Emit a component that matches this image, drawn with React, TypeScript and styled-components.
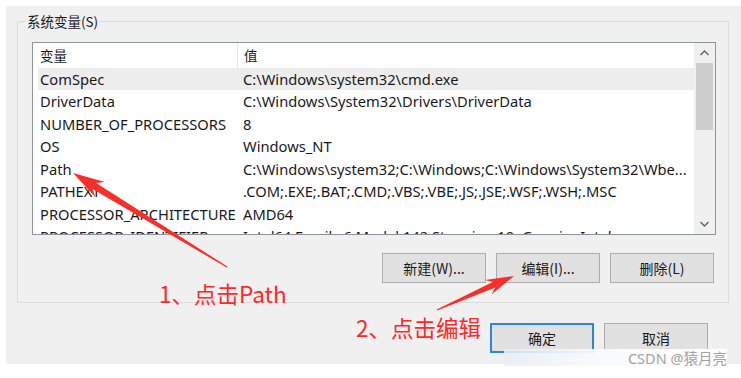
import React from 'react';
import styled, { createGlobalStyle } from 'styled-components';

const GlobalStyle = createGlobalStyle`
  html, body {
    margin: 0;
    padding: 0;
    background: #ffffff;
  }
  body {
    font-family: "Noto Sans", "Noto Sans CJK SC", sans-serif;
  }
`;

const UI_FONT = `"Noto Sans", "Noto Sans CJK SC", sans-serif`;
const CJK_FONT = `"Noto Sans CJK SC", "Noto Sans", sans-serif`;

const Page = styled.div`
  position: relative;
  width: 741px;
  height: 378px;
  overflow: hidden;
  background: #ffffff;
`;

const Dialog = styled.div`
  margin: 6px 0 0 6px;
  width: 735px;
  height: 358px;
  box-sizing: border-box;
  background: #f0f0f0;
  padding: 15px 33px 0 11px;
  display: flex;
  flex-direction: column;
`;

const GroupBox = styled.div`
  position: relative;
  width: 712px;
  height: 282px;
  box-sizing: border-box;
  border: 1px solid #dcdcdc;
  padding: 20px 12px 0 14px;
  display: flex;
  flex-direction: column;
`;

const GroupLabel = styled.span`
  position: absolute;
  top: -10px;
  left: 7px;
  padding: 0 2px;
  background: #f0f0f0;
  font-family: ${CJK_FONT};
  font-size: 13.5px;
  line-height: 18px;
  color: #1a1a1a;
`;

const ListBox = styled.div`
  height: 193px;
  box-sizing: border-box;
  border: 1px solid #8f949c;
  background: #ffffff;
  display: grid;
  grid-template-columns: 1fr 21px;
  overflow: hidden;
`;

const Rows = styled.div`
  overflow: hidden;
  font-family: ${UI_FONT};
  font-size: 14.7px;
  color: #1a1a1a;
`;

const HeaderRow = styled.div`
  height: 24.5px;
  display: grid;
  grid-template-columns: 204px 1fr;
  align-items: center;
`;

const HeaderCell = styled.div<{ $divider?: boolean }>`
  height: 100%;
  display: flex;
  align-items: center;
  padding-left: ${p => (p.$divider ? '6px' : '7px')};
  border-left: ${p => (p.$divider ? '1px solid #e5e5e5' : 'none')};
  font-family: ${CJK_FONT};
  font-size: 13.5px;
  white-space: nowrap;
`;

const Row = styled.div<{ $selected?: boolean }>`
  height: 22.5px;
  margin-left: 5px;
  display: grid;
  grid-template-columns: 199px 1fr;
  align-items: center;
  background: ${p => (p.$selected ? '#ededed' : 'transparent')};
  white-space: nowrap;
`;

const Cell = styled.div`
  padding-left: 2px;
  overflow: hidden;
`;

const ValueCell = styled.div`
  padding-left: 6px;
  overflow: hidden;
`;

const ScrollBar = styled.div`
  background: #f0f0f0;
  display: flex;
  flex-direction: column;
  align-items: center;
`;

const ScrollArrow = styled.div`
  height: 20px;
  width: 100%;
  display: flex;
  align-items: center;
  justify-content: center;
`;

const ScrollTrack = styled.div`
  flex: 1;
  width: 100%;
  display: flex;
  flex-direction: column;
  align-items: center;
`;

const Thumb = styled.div`
  width: 17px;
  height: 67px;
  background: #cdcdcd;
`;

const ButtonRow = styled.div`
  margin-top: 18px;
  margin-right: 2px;
  display: flex;
  justify-content: flex-end;
  gap: 10px;
`;

const Button = styled.button<{ $default?: boolean }>`
  width: 104px;
  height: 30px;
  box-sizing: border-box;
  padding: 0;
  background: #e1e1e1;
  border: ${p => (p.$default ? '2px solid #2c86de' : '1px solid #adadad')};
  border-radius: 0;
  font-family: ${CJK_FONT};
  font-size: 14px;
  color: #1a1a1a;
  &:focus {
    outline: none;
  }
`;

const FooterRow = styled.div`
  margin-top: 20px;
  display: flex;
  justify-content: flex-end;
  gap: 10px;
`;

const Overlay = styled.svg`
  position: absolute;
  left: 0;
  top: 0;
  width: 741px;
  height: 378px;
  pointer-events: none;
`;

const Note = styled.span<{ $x: number; $y: number }>`
  position: absolute;
  left: ${p => p.$x}px;
  top: ${p => p.$y}px;
  font-family: ${CJK_FONT};
  font-size: 22.5px;
  line-height: 1;
  color: #fb2a2a;
  white-space: nowrap;
`;

const Watermark = styled.div`
  position: absolute;
  left: 504px;
  top: 349px;
  width: 223px;
  height: 17px;
  display: flex;
  align-items: center;
  justify-content: flex-end;
  background: linear-gradient(to right, rgba(232, 238, 246, 0.85), rgba(250, 251, 253, 0.97) 45%, #ffffff);
  font-family: ${UI_FONT};
  font-size: 14.5px;
  color: #a3a3a3;
  white-space: nowrap;
`;

const rows: [string, string][] = [
  ['ComSpec', 'C:\\Windows\\system32\\cmd.exe'],
  ['DriverData', 'C:\\Windows\\System32\\Drivers\\DriverData'],
  ['NUMBER_OF_PROCESSORS', '8'],
  ['OS', 'Windows_NT'],
  ['Path', 'C:\\Windows\\system32;C:\\Windows;C:\\Windows\\System32\\Wbe...'],
  ['PATHEXT', '.COM;.EXE;.BAT;.CMD;.VBS;.VBE;.JS;.JSE;.WSF;.WSH;.MSC'],
  ['PROCESSOR_ARCHITECTURE', 'AMD64'],
  ['PROCESSOR_IDENTIFIER', 'Intel64 Family 6 Model 142 Stepping 10, GenuineIntel'],
];

// tapered annotation arrow, tail -> tip
function arrowPoints(sx: number, sy: number, tx: number, ty: number, head = 30, wing = 9, neck = 3.5) {
  const dx = tx - sx;
  const dy = ty - sy;
  const len = Math.hypot(dx, dy);
  const ux = dx / len;
  const uy = dy / len;
  const nx = -uy;
  const ny = ux;
  const bx = tx - ux * head;
  const by = ty - uy * head;
  const cx = tx - ux * head * 0.78;
  const cy = ty - uy * head * 0.78;
  const pts = [
    [sx + nx * 0.6, sy + ny * 0.6],
    [cx + nx * neck, cy + ny * neck],
    [bx + nx * wing, by + ny * wing],
    [tx, ty],
    [bx - nx * wing, by - ny * wing],
    [cx - nx * neck, cy - ny * neck],
    [sx - nx * 0.6, sy - ny * 0.6],
  ];
  return pts.map(p => `${p[0].toFixed(1)},${p[1].toFixed(1)}`).join(' ');
}

const Chevron: React.FC<{ up?: boolean }> = ({ up }) => (
  <svg width="9" height="6" viewBox="0 0 9 6">
    <polyline
      points={up ? '0.5,5 4.5,1 8.5,5' : '0.5,1 4.5,5 8.5,1'}
      fill="none"
      stroke="#606060"
      strokeWidth="1.3"
    />
  </svg>
);

export default function App() {
  return (
    <Page>
      <GlobalStyle />
      <Dialog>
        <GroupBox>
          <GroupLabel>系统变量(S)</GroupLabel>
          <ListBox>
            <Rows>
              <HeaderRow>
                <HeaderCell>变量</HeaderCell>
                <HeaderCell $divider>值</HeaderCell>
              </HeaderRow>
              {rows.map(([name, value], i) => (
                <Row key={name} $selected={i === 0}>
                  <Cell>{name}</Cell>
                  <ValueCell>{value}</ValueCell>
                </Row>
              ))}
            </Rows>
            <ScrollBar>
              <ScrollArrow>
                <Chevron up />
              </ScrollArrow>
              <ScrollTrack>
                <Thumb />
              </ScrollTrack>
              <ScrollArrow>
                <Chevron />
              </ScrollArrow>
            </ScrollBar>
          </ListBox>
          <ButtonRow>
            <Button>新建(W)...</Button>
            <Button>编辑(I)...</Button>
            <Button>删除(L)</Button>
          </ButtonRow>
        </GroupBox>
        <FooterRow>
          <Button $default>确定</Button>
          <Button>取消</Button>
        </FooterRow>
      </Dialog>

      <Overlay viewBox="0 0 741 378">
        <polygon points={arrowPoints(227, 267, 73, 173, 32, 9, 3.5)} fill="#f5302a" />
        <polygon points={arrowPoints(437, 310, 514, 276, 28, 8, 3)} fill="#f5302a" />
      </Overlay>
      <Note $x={159} $y={282}>1、点击Path</Note>
      <Note $x={356} $y={316}>2、点击编辑</Note>
      <Watermark>CSDN @猿月亮</Watermark>
    </Page>
  );
}
